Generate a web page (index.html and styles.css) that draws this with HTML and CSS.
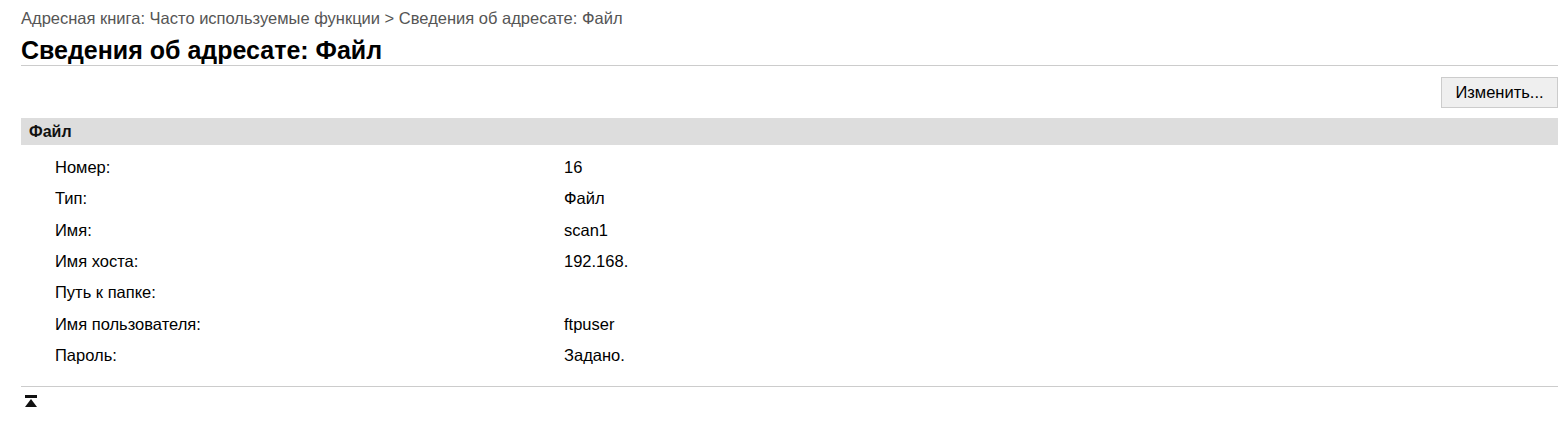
FILE: index.html
```html
<!DOCTYPE html>
<html lang="ru">
<head>
<meta charset="utf-8">
<link rel="stylesheet" href="styles.css">
</head>
<body>
<div class="page">
  <div class="crumb">Адресная книга: Часто используемые функции &gt; Сведения об адресате: Файл</div>
  <h1 class="title">Сведения об адресате: Файл</h1>
  <div class="actions"><button class="btn">Изменить...</button></div>
  <div class="section-head">Файл</div>
  <div class="rows">
    <div class="row"><span class="label">Номер:</span><span class="value">16</span></div>
    <div class="row"><span class="label">Тип:</span><span class="value">Файл</span></div>
    <div class="row"><span class="label">Имя:</span><span class="value">scan1</span></div>
    <div class="row"><span class="label">Имя хоста:</span><span class="value">192.168.</span></div>
    <div class="row"><span class="label">Путь к папке:</span><span class="value"></span></div>
    <div class="row"><span class="label">Имя пользователя:</span><span class="value">ftpuser</span></div>
    <div class="row"><span class="label">Пароль:</span><span class="value">Задано.</span></div>
  </div>
  <div class="footer">
    <svg class="top-icon" width="14" height="13" viewBox="0 0 14 13"><rect x="1" y="0" width="12" height="3" fill="#111"/><polygon points="7,4 13,12 1,12" fill="#111"/></svg>
  </div>
</div>
</body>
</html>
```

FILE: styles.css
```css
html, body { margin: 0; padding: 0; background: #fff; }
body { font-family: "Liberation Sans", Arial, sans-serif; color: #000; }
.page { padding: 9px 1px 0 21px; }
.crumb { font-size: 16.5px; color: #555; line-height: 18px; }
.title { font-size: 25px; font-weight: bold; margin: 9px 0 0 0; line-height: 28px; padding-bottom: 1px; border-bottom: 1px solid #ccc; }
.actions { display: flex; justify-content: flex-end; padding-top: 11px; }
.btn { font-family: "Liberation Sans", Arial, sans-serif; font-size: 16.5px; color: #000; background: #efefef; border: 1px solid #ccc; height: 31px; width: 117px; padding: 0; }
.section-head { margin-top: 10px; background: #ddd; height: 27px; line-height: 27px; font-size: 16px; font-weight: bold; padding-left: 8px; color: #111; }
.rows { padding: 7px 0 15px 0; border-bottom: 1px solid #ccc; }
.row { display: flex; height: 31.33px; align-items: center; font-size: 16.5px; }
.label { width: 509px; padding-left: 34px; }
.footer { padding: 8px 0 0 3px; }
.top-icon { display: block; }
```
